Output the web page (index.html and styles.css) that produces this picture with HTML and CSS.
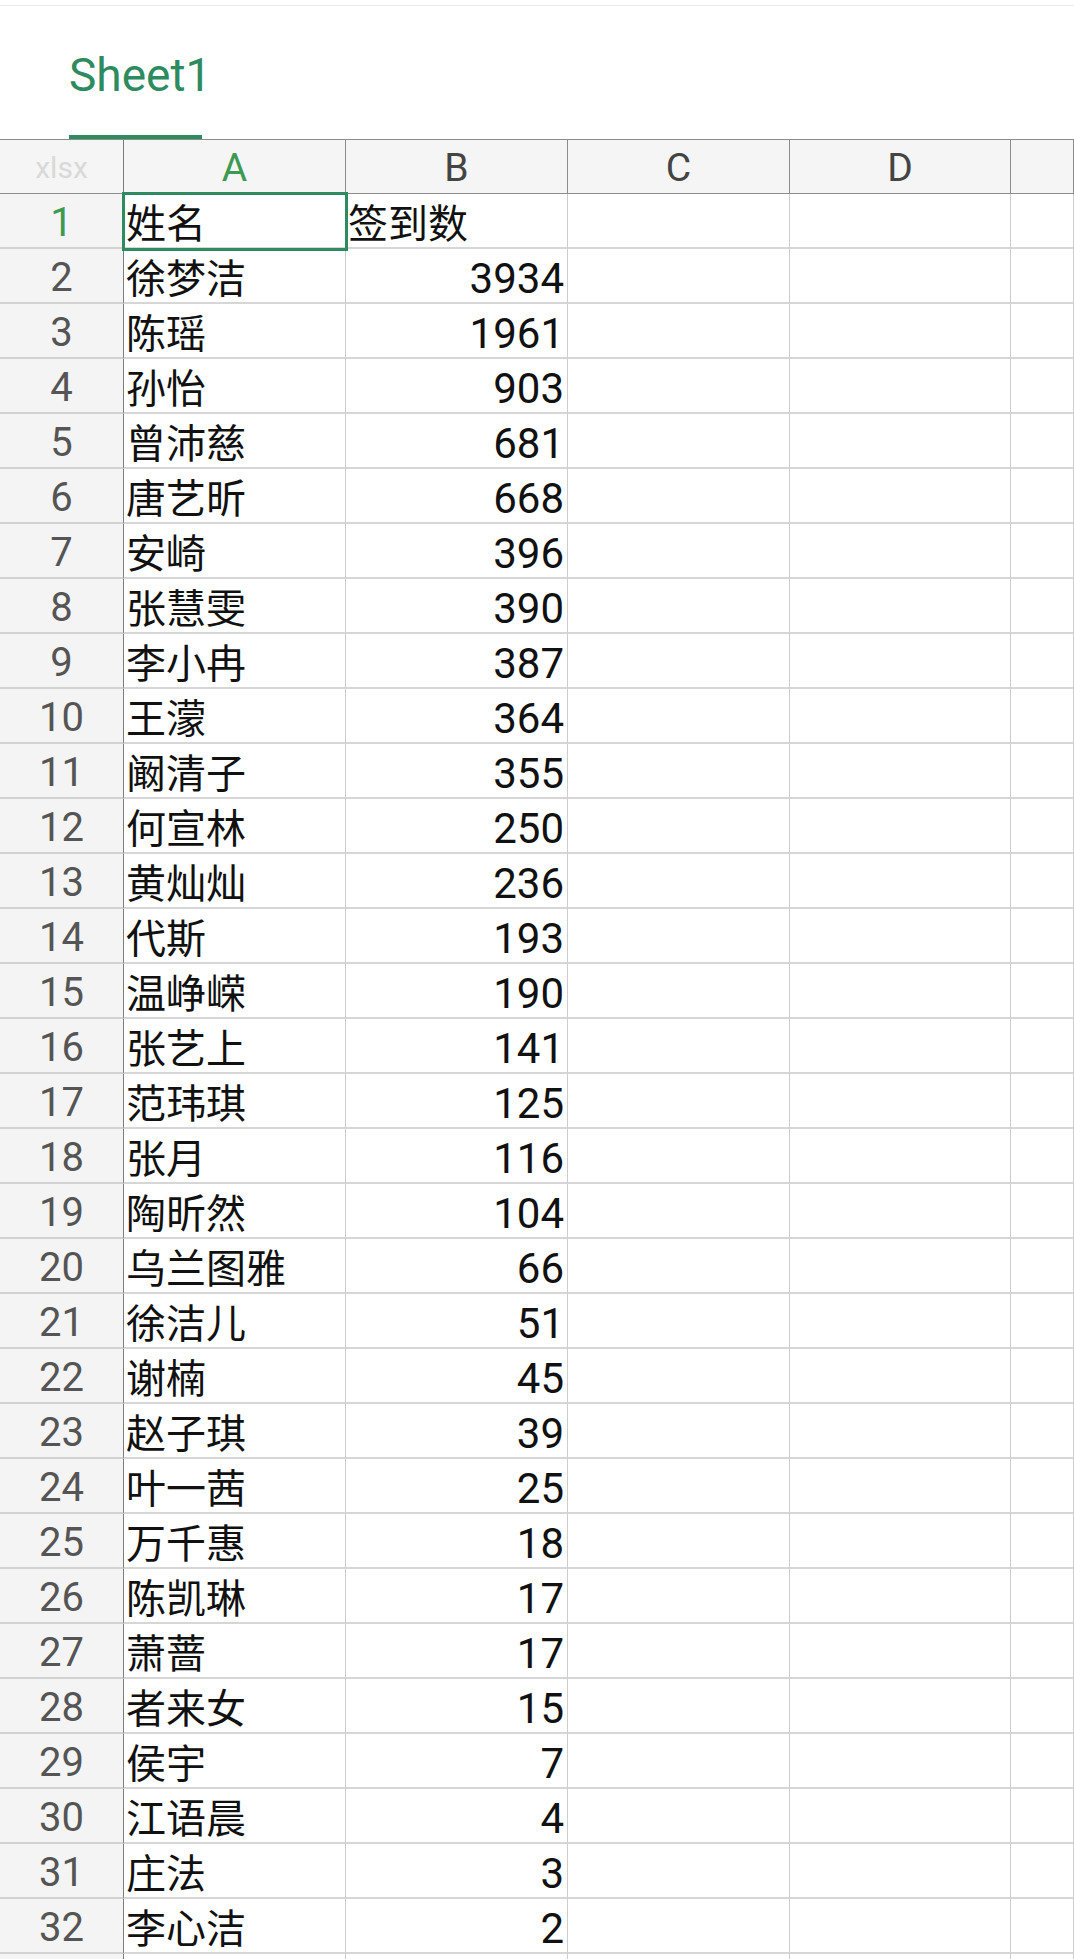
FILE: index.html
```html
<!DOCTYPE html>
<html lang="zh-CN">
<head>
<meta charset="utf-8">
<title>Sheet1</title>
<link rel="stylesheet" href="styles.css">
</head>
<body>
<div class="topline"></div>
<div class="tabs"><div class="tab">Sheet1</div></div>
<div class="sheet">
  <div class="ch corner">xlsx</div><div class="ch active">A</div><div class="ch">B</div><div class="ch">C</div><div class="ch">D</div><div class="ch"></div>
  <div class="rh active">1</div><div class="c sel">姓名</div><div class="c">签到数</div><div class="c"></div><div class="c"></div><div class="c"></div>
  <div class="rh">2</div><div class="c">徐梦洁</div><div class="c num">3934</div><div class="c"></div><div class="c"></div><div class="c"></div>
  <div class="rh">3</div><div class="c">陈瑶</div><div class="c num">1961</div><div class="c"></div><div class="c"></div><div class="c"></div>
  <div class="rh">4</div><div class="c">孙怡</div><div class="c num">903</div><div class="c"></div><div class="c"></div><div class="c"></div>
  <div class="rh">5</div><div class="c">曾沛慈</div><div class="c num">681</div><div class="c"></div><div class="c"></div><div class="c"></div>
  <div class="rh">6</div><div class="c">唐艺昕</div><div class="c num">668</div><div class="c"></div><div class="c"></div><div class="c"></div>
  <div class="rh">7</div><div class="c">安崎</div><div class="c num">396</div><div class="c"></div><div class="c"></div><div class="c"></div>
  <div class="rh">8</div><div class="c">张慧雯</div><div class="c num">390</div><div class="c"></div><div class="c"></div><div class="c"></div>
  <div class="rh">9</div><div class="c">李小冉</div><div class="c num">387</div><div class="c"></div><div class="c"></div><div class="c"></div>
  <div class="rh">10</div><div class="c">王濛</div><div class="c num">364</div><div class="c"></div><div class="c"></div><div class="c"></div>
  <div class="rh">11</div><div class="c">阚清子</div><div class="c num">355</div><div class="c"></div><div class="c"></div><div class="c"></div>
  <div class="rh">12</div><div class="c">何宣林</div><div class="c num">250</div><div class="c"></div><div class="c"></div><div class="c"></div>
  <div class="rh">13</div><div class="c">黄灿灿</div><div class="c num">236</div><div class="c"></div><div class="c"></div><div class="c"></div>
  <div class="rh">14</div><div class="c">代斯</div><div class="c num">193</div><div class="c"></div><div class="c"></div><div class="c"></div>
  <div class="rh">15</div><div class="c">温峥嵘</div><div class="c num">190</div><div class="c"></div><div class="c"></div><div class="c"></div>
  <div class="rh">16</div><div class="c">张艺上</div><div class="c num">141</div><div class="c"></div><div class="c"></div><div class="c"></div>
  <div class="rh">17</div><div class="c">范玮琪</div><div class="c num">125</div><div class="c"></div><div class="c"></div><div class="c"></div>
  <div class="rh">18</div><div class="c">张月</div><div class="c num">116</div><div class="c"></div><div class="c"></div><div class="c"></div>
  <div class="rh">19</div><div class="c">陶昕然</div><div class="c num">104</div><div class="c"></div><div class="c"></div><div class="c"></div>
  <div class="rh">20</div><div class="c">乌兰图雅</div><div class="c num">66</div><div class="c"></div><div class="c"></div><div class="c"></div>
  <div class="rh">21</div><div class="c">徐洁儿</div><div class="c num">51</div><div class="c"></div><div class="c"></div><div class="c"></div>
  <div class="rh">22</div><div class="c">谢楠</div><div class="c num">45</div><div class="c"></div><div class="c"></div><div class="c"></div>
  <div class="rh">23</div><div class="c">赵子琪</div><div class="c num">39</div><div class="c"></div><div class="c"></div><div class="c"></div>
  <div class="rh">24</div><div class="c">叶一茜</div><div class="c num">25</div><div class="c"></div><div class="c"></div><div class="c"></div>
  <div class="rh">25</div><div class="c">万千惠</div><div class="c num">18</div><div class="c"></div><div class="c"></div><div class="c"></div>
  <div class="rh">26</div><div class="c">陈凯琳</div><div class="c num">17</div><div class="c"></div><div class="c"></div><div class="c"></div>
  <div class="rh">27</div><div class="c">萧蔷</div><div class="c num">17</div><div class="c"></div><div class="c"></div><div class="c"></div>
  <div class="rh">28</div><div class="c">者来女</div><div class="c num">15</div><div class="c"></div><div class="c"></div><div class="c"></div>
  <div class="rh">29</div><div class="c">侯宇</div><div class="c num">7</div><div class="c"></div><div class="c"></div><div class="c"></div>
  <div class="rh">30</div><div class="c">江语晨</div><div class="c num">4</div><div class="c"></div><div class="c"></div><div class="c"></div>
  <div class="rh">31</div><div class="c">庄法</div><div class="c num">3</div><div class="c"></div><div class="c"></div><div class="c"></div>
  <div class="rh">32</div><div class="c">李心洁</div><div class="c num">2</div><div class="c"></div><div class="c"></div><div class="c"></div>
  <div class="rh"></div><div class="c"></div><div class="c"></div><div class="c"></div><div class="c"></div><div class="c"></div>
</div>
</body>
</html>
```
FILE: styles.css
```css
html, body {
  margin: 0;
  padding: 0;
  background: #ffffff;
}
body {
  font-family: Roboto, "Noto Sans CJK SC", sans-serif;
  color: #111;
  overflow: hidden;
  height: 1959px;
}
.topline {
  height: 5px;
  border-bottom: 1px solid #ebebeb;
}
.tabs {
  height: 133px;
  display: flex;
}
.tab {
  box-sizing: border-box;
  margin-left: 69px;
  width: 133px;
  height: 133px;
  padding-top: 42px;
  font-size: 46px;
  line-height: 54px;
  text-align: center;
  color: #2e8a5f;
  border-bottom: 4px solid #2e8a5f;
}
.sheet {
  display: grid;
  grid-template-columns: 124px 222px 222px 222px 221px 1fr;
  grid-template-rows: 54px;
  grid-auto-rows: 55px;
  border-top: 1px solid #8c8c8c;
}
.sheet > div {
  box-sizing: border-box;
  display: flex;
  align-items: center;
  white-space: nowrap;
  overflow: visible;
}
.ch {
  background: #f5f5f5;
  border-right: 1px solid #8c8c8c;
  border-bottom: 1px solid #8c8c8c;
  justify-content: center;
  font-size: 39px;
  color: #444;
  padding-top: 2px;
}
.ch.corner {
  font-size: 30px;
  color: #d9d9d9;
  border-right-color: #7a7a7a;
}
.ch.active, .rh.active {
  color: #3d9a52;
}
.rh {
  background: #f4f4f4;
  border-right: 1px solid #7d7d7d;
  border-bottom: 2px solid #d2d2d2;
  justify-content: center;
  font-size: 40px;
  color: #555;
  padding-top: 4px;
}
.c {
  background: #fff;
  border-right: 1px solid #cdcdcd;
  border-bottom: 2px solid #d6d6d6;
  font-size: 40px;
  padding-left: 2px;
  color: #111;
}
.c.num {
  justify-content: flex-end;
  padding-left: 0;
  padding-right: 3px;
  padding-top: 5px;
  font-size: 42px;
}
.c.sel {
  outline: 3px solid #2e8a5f;
  outline-offset: -1px;
  position: relative;
  z-index: 1;
}
```
